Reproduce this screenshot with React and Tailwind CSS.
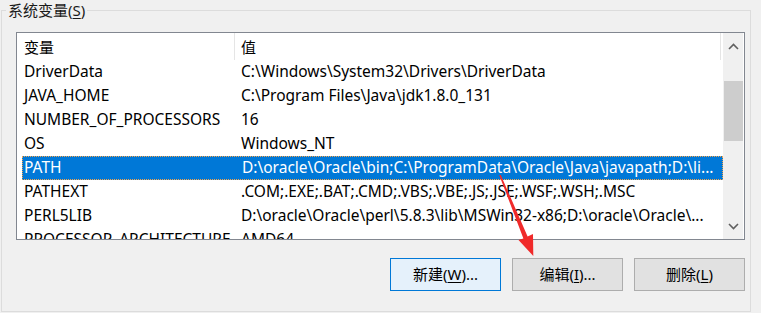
import React from 'react'

const font = { fontFamily: '"Noto Sans", "Noto Sans CJK SC", sans-serif' }

const rows = [
    ['DriverData', 'C:\\Windows\\System32\\Drivers\\DriverData'],
    ['JAVA_HOME', 'C:\\Program Files\\Java\\jdk1.8.0_131'],
    ['NUMBER_OF_PROCESSORS', '16'],
    ['OS', 'Windows_NT'],
    ['PATH', 'D:\\oracle\\Oracle\\bin;C:\\ProgramData\\Oracle\\Java\\javapath;D:\\li...'],
    ['PATHEXT', '.COM;.EXE;.BAT;.CMD;.VBS;.VBE;.JS;.JSE;.WSF;.WSH;.MSC'],
    ['PERL5LIB', 'D:\\oracle\\Oracle\\perl\\5.8.3\\lib\\MSWin32-x86;D:\\oracle\\Oracle\\...'],
    ['PROCESSOR_ARCHITECTURE', 'AMD64'],
]

function Chevron({ up }) {
    return (
        <svg width="11" height="7" viewBox="0 0 11 7">
            <polyline
                points={up ? '1,6 5.5,1.5 10,6' : '1,1 5.5,5.5 10,1'}
                fill="none"
                stroke="#606060"
                strokeWidth="1.6"
            />
        </svg>
    )
}

function Button({ label, hotkey, suffix, primary }) {
    return (
        <button
            className={`w-[111px] h-[33px] flex items-center justify-center text-[15px] text-black border ${primary ? 'bg-[#e5f1fb] border-[#0078d7]' : 'bg-[#e1e1e1] border-[#adadad]'}`}
        >
            {label}(<span className="underline underline-offset-2">{hotkey}</span>){suffix}
        </button>
    )
}

export default function App() {
    return (
        <div className="relative w-[761px] h-[313px] bg-[#f0f0f0] overflow-hidden" style={font}>
            <fieldset className="ml-[1px] w-[750px] h-[312px] border border-[#dcdcdc]">
                <legend className="ml-[4px] px-[2px] text-[15px] leading-[20px] text-[#1a1a1a]">
                    系统变量(<span className="underline underline-offset-2">S</span>)
                </legend>

                <div className="ml-[14px] mt-[12px] w-[729px] h-[208px] border border-[#828790] bg-white flex overflow-hidden">
                    <div className="flex-1 flex flex-col">
                        <div className="h-[27px] shrink-0 flex items-center ml-[5px] text-[15px] text-black">
                            <div className="w-[213px] h-full pl-[2px] pt-[1px] flex items-center border-r border-[#e5e5e5]">变量</div>
                            <div className="w-[486px] h-full pl-[6px] pt-[1px] flex items-center border-r border-[#e5e5e5]">值</div>
                        </div>
                        {rows.map(([name, value]) => {
                            const sel = name === 'PATH'
                            return (
                                <div
                                    key={name}
                                    className={`h-[24px] shrink-0 ml-[5px] flex items-center whitespace-nowrap text-[15.5px] ${sel ? 'bg-[#0078d7] text-white border border-dotted border-[#f5a44c]' : 'text-black'}`}
                                >
                                    <div className={`w-[213px] shrink-0 ${sel ? 'pl-[1px]' : 'pl-[2px]'}`}>{name}</div>
                                    <div className="pl-[6px]">{value}</div>
                                </div>
                            )
                        })}
                    </div>
                    <div className="w-[20px] mr-[1px] shrink-0 bg-[#f0f0f0] flex flex-col items-center">
                        <div className="h-[24px] mt-[1px] flex items-center justify-center">
                            <Chevron up />
                        </div>
                        <div className="mt-[23px] w-[19px] h-[60px] bg-[#cdcdcd]" />
                        <div className="flex-1" />
                        <div className="h-[24px] mb-[1px] flex items-center justify-center">
                            <Chevron />
                        </div>
                    </div>
                </div>

                <div className="ml-[14px] mt-[18px] w-[729px] flex justify-end gap-[11px]">
                    <Button label="新建" hotkey="W" suffix="..." primary />
                    <Button label="编辑" hotkey="I" suffix="..." />
                    <Button label="删除" hotkey="L" suffix="" />
                </div>
            </fieldset>

            <svg className="absolute left-0 top-0 pointer-events-none" width="761" height="313">
                <polygon
                    points="499.2,175 500.8,175 527.6,236.6 533,234 533.3,256 518.5,240 523.4,238.4"
                    fill="#f02a2a"
                />
            </svg>
        </div>
    )
}
